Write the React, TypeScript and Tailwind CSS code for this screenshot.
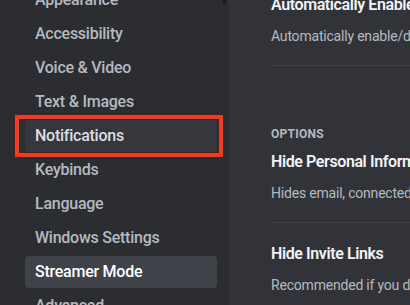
const navItems = [
  "Appearance",
  "Accessibility",
  "Voice & Video",
  "Text & Images",
  "Notifications",
  "Keybinds",
  "Language",
  "Windows Settings",
  "Streamer Mode",
  "Advanced",
]

export default function App() {
  return (
    <div className="flex w-[410px] h-[305px] overflow-hidden font-['Roboto',sans-serif]">
      {/* Sidebar */}
      <div className="relative w-[229px] shrink-0 bg-[#2b2d31] pl-[25px] pr-[12px]">
        <div className="absolute right-[3px] top-0 w-[3px] h-[4px] bg-[#1a1b1e]"></div>
        <div className="flex flex-col gap-[2px] mt-[-16px]">
          {navItems.map((item) => {
            const selected = item === "Streamer Mode"
            const hovered = item === "Notifications"
            return (
              <div
                key={item}
                className={
                  "relative h-8 px-[10px] flex items-center rounded-[4px] text-[16px] font-medium tracking-[-0.25px] " +
                  (selected
                    ? "bg-[#404249] text-white"
                    : hovered
                    ? "bg-[#35373c] text-[#dbdee1]"
                    : "text-[#b5bac1]")
                }
              >
                {item}
                {hovered && (
                  <div className="absolute left-[-10px] right-[-6px] top-[-5px] bottom-[-5px] border-4 border-[#f43b1c]"></div>
                )}
              </div>
            )
          })}
        </div>
      </div>

      {/* Content */}
      <div className="flex-1 min-w-0 bg-[#313338] pl-[42px] overflow-hidden whitespace-nowrap">
        <div className="flex flex-col mt-[-5px]">
          <div className="h-5 leading-5 text-[16px] font-semibold tracking-[-0.4px] text-[#f2f3f5]">Automatically Enable/Disable</div>
          <div className="mt-3 h-[18px] leading-[18px] text-[14px] tracking-[-0.2px] text-[#b5bac1]">
            Automatically enable/disable Streamer Mode when OBS or XSplit is running.
          </div>
          <div className="mt-5 h-px bg-[#3f4147]"></div>

          <div className="mt-[60px] h-4 leading-4 text-[12px] font-bold uppercase tracking-[0.02em] text-[#b5bac1]">Options</div>

          <div className="mt-[10px] h-5 leading-5 text-[16px] font-semibold tracking-[-0.4px] text-[#f2f3f5]">Hide Personal Information</div>
          <div className="mt-3 h-[18px] leading-[18px] text-[14px] tracking-[-0.2px] text-[#b5bac1]">
            Hides email, connected accounts, notes, and anonymizes Discord Tags.
          </div>
          <div className="mt-5 h-px bg-[#3f4147]"></div>

          <div className="mt-[21px] h-5 leading-5 text-[16px] font-semibold tracking-[-0.4px] text-[#f2f3f5]">Hide Invite Links</div>
          <div className="mt-3 h-[18px] leading-[18px] text-[14px] tracking-[-0.2px] text-[#b5bac1]">
            Recommended if you don't want random people accessing your Discord servers.
          </div>
        </div>
      </div>
    </div>
  )
}
